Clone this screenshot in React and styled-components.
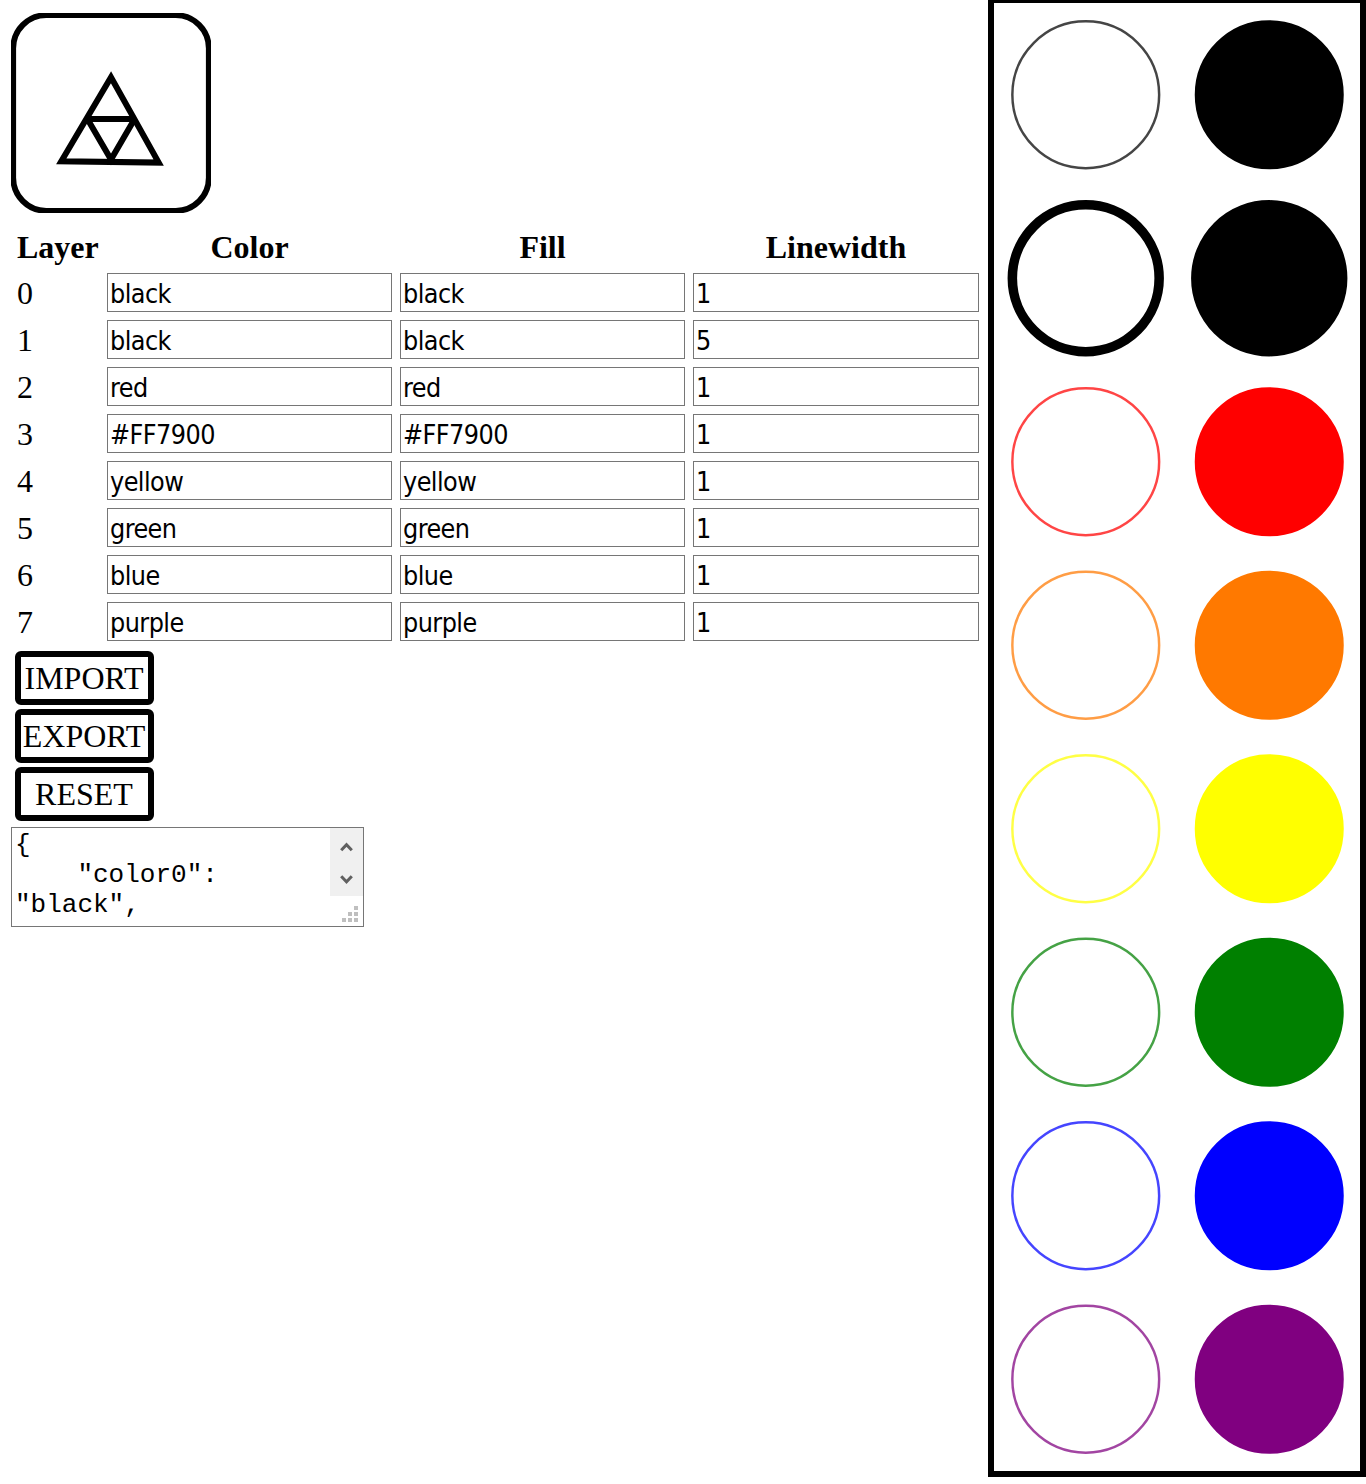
import React from "react";
import styled, { createGlobalStyle } from "styled-components";

const GlobalStyle = createGlobalStyle`
  *, *::before, *::after { box-sizing: border-box; }
  html, body { margin: 0; padding: 0; background: #fff; overflow: hidden; }
  body { color: #000; font: 32px/36px "Liberation Serif", "Times New Roman", serif; }
`;

const Page = styled.div`
  display: flex;
  justify-content: space-between;
  align-items: flex-start;
  width: 1366px;
  height: 1484px;
  overflow: hidden;
`;

const Controls = styled.main`
  display: flex;
  flex-direction: column;
  align-items: flex-start;
  padding: 13px 0 0 11px;
`;

const Logo = styled.svg`
  display: block;
  width: 200px;
  height: 200px;
`;

const LayerTable = styled.div`
  display: grid;
  grid-template-columns: 82px 285px 285px 286px;
  column-gap: 8px;
  row-gap: 8px;
  margin: 15px 0 0 6px;
`;

const Heading = styled.div`
  height: 37px;
  line-height: 38px;
  font-weight: bold;
  text-align: ${(p) => (p.$start ? "left" : "center")};
`;

const LayerNumber = styled.div`
  height: 39px;
  line-height: 41px;
`;

const Field = styled.input`
  display: block;
  width: 100%;
  height: 39px;
  margin: 0;
  padding: 2px 2px 0;
  border: 1px solid #767676;
  border-radius: 0;
  outline: none;
  background: #fff;
  color: #000;
  font-family: "DejaVu Sans Condensed", "DejaVu Sans", sans-serif;
  font-stretch: condensed;
  font-size: 26.67px;
  letter-spacing: -0.55px;
`;

const Actions = styled.div`
  display: flex;
  flex-direction: column;
  gap: 4px;
  margin: 10px 0 0 4px;
`;

const Action = styled.button`
  width: 139px;
  height: 54px;
  padding: 0 1px 0 0;
  border: 6px solid #000;
  border-radius: 6px;
  background: #fff;
  color: #000;
  font: inherit;
  line-height: 42px;
  text-align: center;
  white-space: nowrap;
`;

const Output = styled.div`
  display: flex;
  width: 353px;
  height: 100px;
  margin-top: 6px;
  border: 1px solid #767676;
  overflow: hidden;
`;

const Code = styled.pre`
  flex: 1;
  height: 98px;
  margin: 0;
  padding: 2px 0 0 3px;
  overflow: hidden;
  font: 26px/30px "Liberation Mono", "Courier New", monospace;
`;

const CodeLine = styled.div`
  height: 30px;
  line-height: ${(p) => (p.$last ? 36 : 30)}px;
`;

const ScrollColumn = styled.div`
  display: flex;
  flex-direction: column;
  width: 33px;
`;

const ScrollBar = styled.div`
  height: 68px;
  background: #f0f0f0;
`;

const Glyph = styled.svg`
  display: block;
  width: 33px;
  height: ${(p) => p.$height}px;
`;

const Palette = styled.aside`
  flex: none;
  width: 378px;
  height: 1480px;
  margin-top: -3px;
  border: 6px solid #000;
  overflow: hidden;
`;

const Swatches = styled.svg`
  display: block;
  width: 367px;
  height: 1468px;
`;

const Ring = styled.circle`
  fill: none;
  stroke-width: ${(p) => (p.$thin ? 1.35 : 5.2)};
  stroke-opacity: ${(p) => (p.$thin ? 0.73 : 1)};
`;

const layers = [
  { color: "black", width: 1 },
  { color: "black", width: 5 },
  { color: "red", width: 1 },
  { color: "#FF7900", width: 1 },
  { color: "yellow", width: 1 },
  { color: "green", width: 1 },
  { color: "blue", width: 1 },
  { color: "purple", width: 1 },
];

const exported = ["{", '    "color0":', '"black",', '    "fill0":'];

export default function App() {
  return (
    <>
      <GlobalStyle />
      <Page>
        <Controls>
          <Logo viewBox="0 0 200 200" fill="none" stroke="#000">
            <rect x="2.2" y="2.2" width="195.6" height="195.6" rx="33" strokeWidth="5.8" />
            <g strokeWidth="6">
              <path d="M100 64.2 L50.3 148.2 L147.7 149.6 Z" />
              <path d="M76 106H124" />
              <path d="M77 107L100 146.5L123 107" />
            </g>
          </Logo>

          <LayerTable>
            <Heading $start>Layer</Heading>
            <Heading>Color</Heading>
            <Heading>Fill</Heading>
            <Heading>Linewidth</Heading>
            {layers.map((layer, i) => (
              <React.Fragment key={i}>
                <LayerNumber>{i}</LayerNumber>
                <Field defaultValue={layer.color} spellCheck={false} />
                <Field defaultValue={layer.color} spellCheck={false} />
                <Field defaultValue={layer.width} spellCheck={false} />
              </React.Fragment>
            ))}
          </LayerTable>

          <Actions>
            <Action>IMPORT</Action>
            <Action>EXPORT</Action>
            <Action>RESET</Action>
          </Actions>

          <Output>
            <Code>
              {exported.map((line, i) => (
                <CodeLine key={i} $last={i === exported.length - 1}>
                  {line}
                </CodeLine>
              ))}
            </Code>
            <ScrollColumn>
              <ScrollBar>
                <Glyph $height={68} viewBox="0 0 33 68" fill="none" stroke="#606060" strokeWidth="3">
                  <path d="M11.2 22.3L16.5 16.7L21.8 22.3" />
                  <path d="M11.2 48.3L16.5 53.9L21.8 48.3" />
                </Glyph>
              </ScrollBar>
              <Glyph $height={30} viewBox="0 0 33 30" fill="#bfbfbf">
                <path d="M24 10h4v4h-4zM18 16h4v4h-4zM24 16h4v4h-4zM12 22h4v4h-4zM18 22h4v4h-4zM24 22h4v4h-4z" />
              </Glyph>
            </ScrollColumn>
          </Output>
        </Controls>

        <Palette>
          <Swatches viewBox="0 0 200 800">
            {layers.map((layer, i) => (
              <g key={i} stroke={layer.color} strokeWidth={layer.width + 0.2}>
                <Ring cx="50" cy={50 + i * 100} r="40" $thin={layer.width === 1} />
                <circle cx="150" cy={50 + i * 100} r="40" fill={layer.color} />
              </g>
            ))}
          </Swatches>
        </Palette>
      </Page>
    </>
  );
}
